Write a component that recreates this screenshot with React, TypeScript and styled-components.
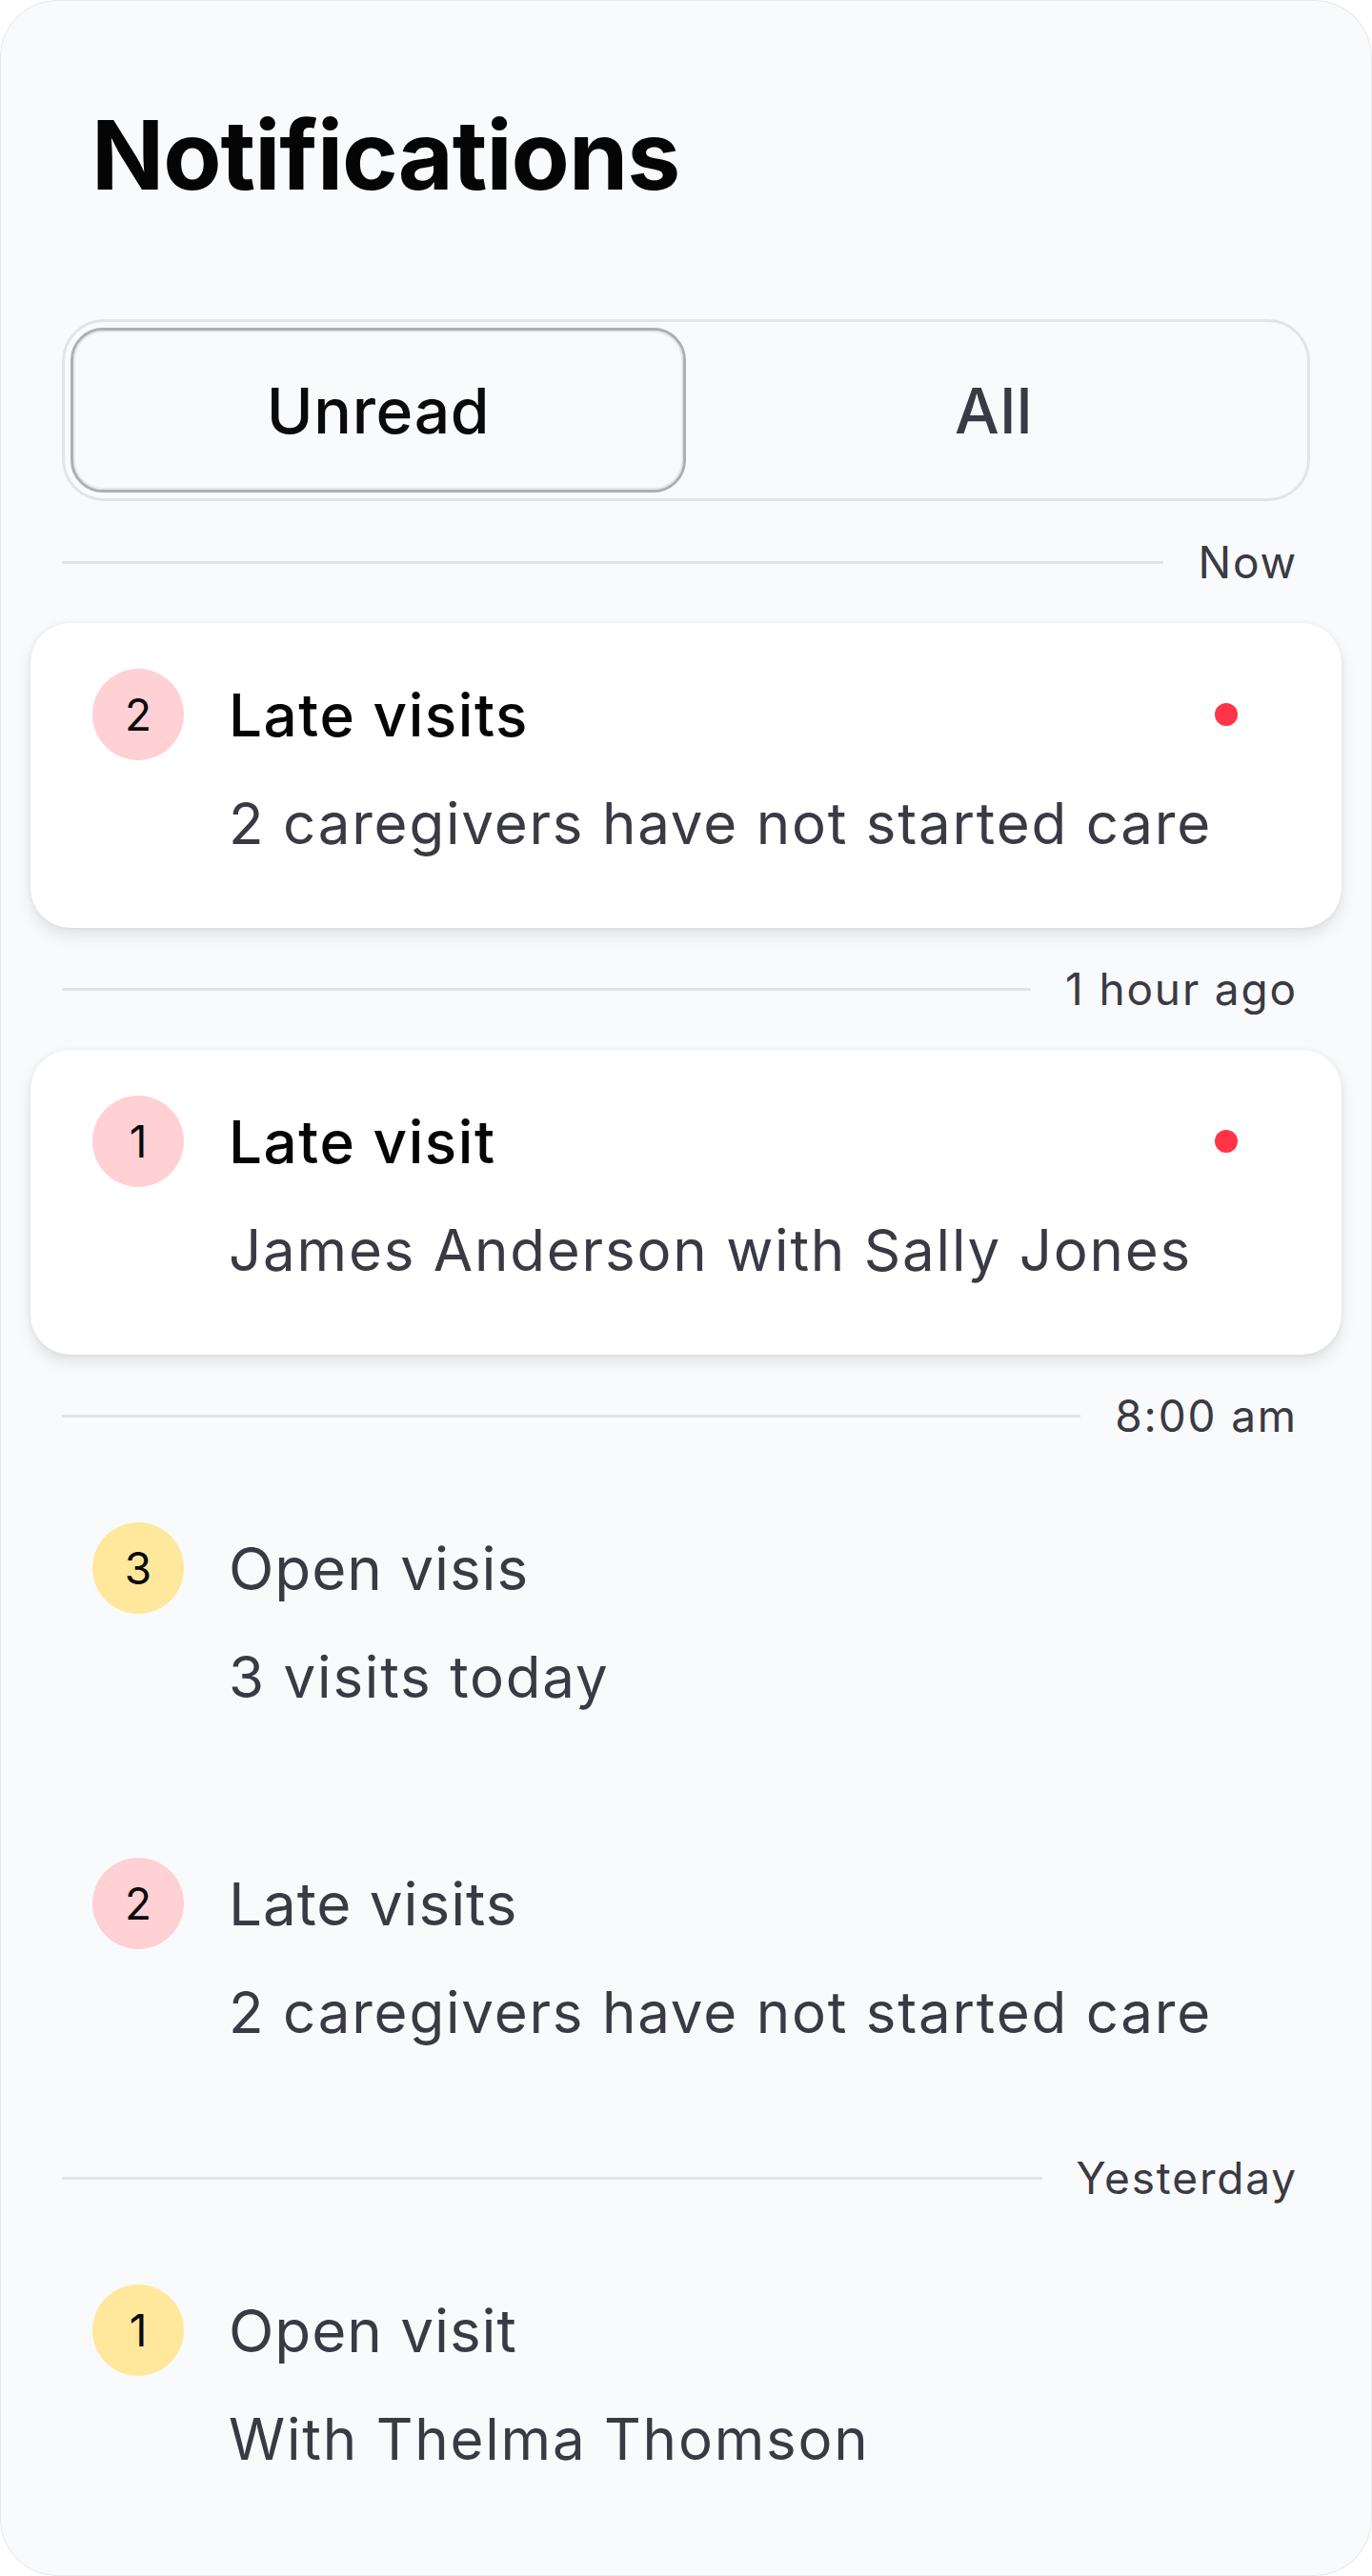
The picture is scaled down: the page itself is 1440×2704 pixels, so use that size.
import React from 'react';
import styled, { createGlobalStyle } from 'styled-components';

const GlobalStyle = createGlobalStyle`
  * {
    box-sizing: border-box;
  }
  body {
    margin: 0;
    background: #ffffff;
    font-family: Inter, "Noto Sans", sans-serif;
  }
`;

const BADGE_COLORS = {
  late: '#FFD0D4',
  open: '#FFE89C',
};

const StyledFrame = styled.div`
  width: 1440px;
  height: 2704px;
  background: #f9fafc;
  border: 1px solid #e7e7eb;
  border-radius: 60px;
  padding: 0 64px 32px;
  overflow: hidden;
`;

const StyledTitle = styled.h1`
  margin: 112px 0 122px 31px;
  font-size: 100px;
  line-height: 1;
  font-weight: 700;
  letter-spacing: -0.01em;
  color: #050505;
`;

const StyledList = styled.div`
  display: flex;
  flex-direction: column;
  gap: 32px;
`;

const StyledTabs = styled.div`
  height: 191px;
  display: grid;
  grid-template-columns: 1fr 1fr;
  padding: 6px;
  border: 3px solid #e4e4e8;
  border-radius: 44px;
`;

const StyledTab = styled.button<{ $active?: boolean }>`
  display: flex;
  align-items: center;
  justify-content: center;
  font-family: Inter, "Noto Sans", sans-serif;
  font-size: 66px;
  font-weight: 500;
  letter-spacing: 0.01em;
  color: ${(p) => (p.$active ? '#0a0a0a' : '#3a3a44')};
  background: #f9fafc;
  border: 3px solid ${(p) => (p.$active ? '#aeaeb3' : 'transparent')};
  border-radius: 34px;
  box-shadow: ${(p) => (p.$active ? 'inset 0 0 0 2px #e9e9ec' : 'none')};
  cursor: pointer;
`;

const StyledDivider = styled.div`
  height: 64px;
  display: flex;
  align-items: center;
  gap: 36px;
  padding-right: 13px;
`;

const StyledLine = styled.div`
  flex: 1;
  height: 3px;
  background: #e3e3e7;
`;

const StyledStamp = styled.span`
  font-size: 46px;
  letter-spacing: 0.04em;
  color: #3a3a44;
`;

const StyledItem = styled.div<{ $card?: boolean }>`
  height: 320px;
  margin: 0 -33px;
  padding: 48px 109px 0 65px;
  border-radius: 42px;
  background: ${(p) => (p.$card ? '#ffffff' : 'transparent')};
  box-shadow: ${(p) =>
    p.$card ? '0 8px 16px rgba(0, 0, 0, 0.1), 0 0 6px rgba(0, 0, 0, 0.05)' : 'none'};
`;

const StyledHead = styled.div`
  height: 96px;
  display: flex;
  align-items: center;
  gap: 47px;
`;

const StyledBadge = styled.span<{ $kind: 'late' | 'open' }>`
  width: 96px;
  height: 96px;
  flex: none;
  border-radius: 50%;
  display: flex;
  align-items: center;
  justify-content: center;
  background: ${(p) => BADGE_COLORS[p.$kind]};
  font-size: 46px;
  color: #0a0a0a;
`;

const StyledItemTitle = styled.span<{ $bold?: boolean }>`
  flex: 1;
  font-size: 62px;
  font-weight: ${(p) => (p.$bold ? 500 : 400)};
  letter-spacing: ${(p) => (p.$bold ? '0.025em' : '0.015em')};
  color: ${(p) => (p.$bold ? '#050505' : '#3a3a44')};
`;

const StyledDot = styled.span`
  width: 24px;
  height: 24px;
  border-radius: 50%;
  background: #ff3547;
`;

const StyledBody = styled.p`
  margin: 30px 0 0 143px;
  font-size: 60px;
  line-height: 72px;
  letter-spacing: 0.03em;
  color: #3a3a44;
`;

type Notice = {
  count: number;
  kind: 'late' | 'open';
  title: string;
  text: string;
  unread?: boolean;
};

const sections: { stamp: string; items: Notice[] }[] = [
  {
    stamp: 'Now',
    items: [
      { count: 2, kind: 'late', title: 'Late visits', text: '2 caregivers have not started care', unread: true },
    ],
  },
  {
    stamp: '1 hour ago',
    items: [
      { count: 1, kind: 'late', title: 'Late visit', text: 'James Anderson with Sally Jones', unread: true },
    ],
  },
  {
    stamp: '8:00 am',
    items: [
      { count: 3, kind: 'open', title: 'Open visis', text: '3 visits today' },
      { count: 2, kind: 'late', title: 'Late visits', text: '2 caregivers have not started care' },
    ],
  },
  {
    stamp: 'Yesterday',
    items: [{ count: 1, kind: 'open', title: 'Open visit', text: 'With Thelma Thomson' }],
  },
];

function NoticeItem({ notice }: { notice: Notice }): JSX.Element {
  return (
    <StyledItem $card={notice.unread}>
      <StyledHead>
        <StyledBadge $kind={notice.kind}>{notice.count}</StyledBadge>
        <StyledItemTitle $bold={notice.unread}>{notice.title}</StyledItemTitle>
        {notice.unread && <StyledDot />}
      </StyledHead>
      <StyledBody>{notice.text}</StyledBody>
    </StyledItem>
  );
}

function App(): JSX.Element {
  return (
    <>
      <GlobalStyle />
      <StyledFrame>
        <StyledTitle>Notifications</StyledTitle>
        <StyledList>
          <StyledTabs>
            <StyledTab $active>Unread</StyledTab>
            <StyledTab>All</StyledTab>
          </StyledTabs>
          {sections.map((section) => (
            <React.Fragment key={section.stamp}>
              <StyledDivider>
                <StyledLine />
                <StyledStamp>{section.stamp}</StyledStamp>
              </StyledDivider>
              {section.items.map((n, i) => (
                <NoticeItem key={i} notice={n} />
              ))}
            </React.Fragment>
          ))}
        </StyledList>
      </StyledFrame>
    </>
  );
}

export default App;
